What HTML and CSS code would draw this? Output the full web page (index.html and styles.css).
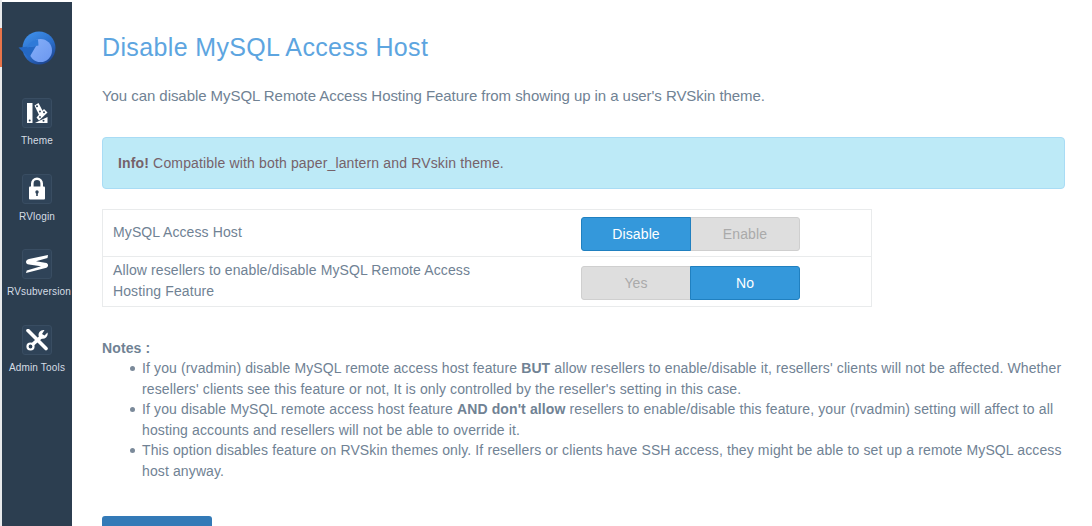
FILE: index.html
```html
<!DOCTYPE html>
<html lang="en">
<head>
<meta charset="utf-8">
<title>Disable MySQL Access Host</title>
<link rel="stylesheet" href="styles.css">
</head>
<body>
<div class="shell">
  <div class="edge"><span class="edge-mark"></span></div>
  <nav class="sidebar">
    <div class="logo">
      <svg width="40" height="35" viewBox="16 30 40 35">
        <defs>
          <linearGradient id="lg" x1="0.2" y1="0" x2="0.8" y2="1"><stop offset="0" stop-color="#3f90ea"/><stop offset="0.55" stop-color="#2a6cc8"/><stop offset="1" stop-color="#1b3f88"/></linearGradient>
          <linearGradient id="lg2" x1="0" y1="0" x2="1" y2="1"><stop offset="0" stop-color="#86aff8"/><stop offset="1" stop-color="#6b97f0"/></linearGradient>
        </defs>
        <circle cx="37" cy="48" r="16.500" fill="url(#lg)"/>
        <circle cx="38.500" cy="50.500" r="11.500" fill="url(#lg2)"/>
        <path d="M16.500 47.500 L34 46 L27 58 Z" fill="#2468c4"/>
        <path d="M25 47.500 C27 43 31 40 36 39.300 L36.500 45.500 Z" fill="#2f7ad8"/>
      </svg>
    </div>
    <a class="nav-item">
      <span class="nav-icon">
        <svg width="22" height="22" viewBox="0 0 22 22" fill="#fff">
          <path d="M1 1h5.500v20H1z"/><circle cx="3.700" cy="18.500" r="1" fill="#2f4358"/>
          <path d="M8.500 3.500L12.500 1L18 11.500L13.500 14Z"/><circle cx="11" cy="4.200" r="1" fill="#2f4358"/><circle cx="14" cy="9.500" r=".9" fill="#2f4358"/>
          <path d="M18 7L21.500 10.500L13 18.500L10.500 15.500Z"/><circle cx="18" cy="10.300" r="1" fill="#2f4358"/><circle cx="14" cy="15" r=".9" fill="#2f4358"/>
          <path d="M9 21L14 18.500L21.500 15V21Z"/><circle cx="17.500" cy="18.700" r="1" fill="#2f4358"/>
        </svg>
      </span>
      <span class="nav-label">Theme</span>
    </a>
    <a class="nav-item">
      <span class="nav-icon">
        <svg width="16" height="23" viewBox="0 0 16 23">
          <path d="M3.300 11V6.500a4.700 4.700 0 0 1 9.400 0V11" fill="none" stroke="#fff" stroke-width="2.600"/>
          <rect x="0" y="9.500" width="16" height="13" rx="1" fill="#fff"/>
          <circle cx="8" cy="15" r="1.700" fill="#2f4358"/><rect x="7.200" y="15.500" width="1.600" height="3.500" fill="#2f4358"/>
        </svg>
      </span>
      <span class="nav-label">RVlogin</span>
    </a>
    <a class="nav-item">
      <span class="nav-icon">
        <svg width="22" height="18" viewBox="0 0 22 18" fill="#fff">
          <path d="M22 0L21.500 3L10 6.300L20.500 8C23 9.500 22.500 12 19.500 13L0 18L.7 15.500L15 11.300L3 9.500C-1 9 -1 5 3 4Z"/>
        </svg>
      </span>
      <span class="nav-label nav-label-wide">RVsubversion</span>
    </a>
    <a class="nav-item">
      <span class="nav-icon">
        <svg width="22" height="22" viewBox="0 0 22 22">
          <path d="M2 1.500 L20 19.500" stroke="#fff" stroke-width="3.600" stroke-linecap="round"/>
          <path d="M15 8 L6 16" stroke="#fff" stroke-width="3.600"/>
          <circle cx="4.500" cy="17.500" r="3" fill="none" stroke="#fff" stroke-width="2.200"/>
          <path d="M21.500 3.500 L18.500 6.500 L16 5 L18.500 1 A5 5 0 0 0 13 8 L15 9.500 A5 5 0 0 0 21.500 3.500Z" fill="#fff"/>
        </svg>
      </span>
      <span class="nav-label">Admin Tools</span>
    </a>
  </nav>
  <main class="content">
    <h1 class="title">Disable MySQL Access Host</h1>
    <p class="lead">You can disable MySQL Remote Access Hosting Feature from showing up in a user's RVSkin theme.</p>
    <div class="alert"><strong>Info!</strong> Compatible with both paper_lantern and RVskin theme.</div>
    <div class="options">
      <div class="row row-one">
        <div class="row-label">MySQL Access Host</div>
        <div class="toggle">
          <span class="tg on tg-a">Disable</span>
          <span class="tg off tg-b">Enable</span>
        </div>
      </div>
      <div class="row row-two">
        <div class="row-label">Allow resellers to enable/disable MySQL Remote Access Hosting Feature</div>
        <div class="toggle">
          <span class="tg off tg-a">Yes</span>
          <span class="tg on tg-b">No</span>
        </div>
      </div>
    </div>
    <div class="notes">
      <div class="notes-title">Notes :</div>
      <ul class="notes-list">
        <li>If you (rvadmin) disable MySQL remote access host feature <b>BUT</b> allow resellers to enable/disable it, resellers' clients will not be affected. Whether resellers' clients see this feature or not, It is only controlled by the reseller's setting in this case.</li>
        <li>If you disable MySQL remote access host feature <b>AND don't allow</b> resellers to enable/disable this feature, your (rvadmin) setting will affect to all hosting accounts and resellers will not be able to override it.</li>
        <li>This option disables feature on RVSkin themes only. If resellers or clients have SSH access, they might be able to set up a remote MySQL access host anyway.</li>
      </ul>
    </div>
    <div class="save"></div>
  </main>
</div>
</body>
</html>
```
FILE: styles.css
```css
html, body {
  margin: 0;
  height: 526px;
  overflow: hidden;
  background: #fff;
}
body {
  font-family: "Liberation Sans", Arial, sans-serif;
  font-size: 14px;
  letter-spacing: 0.12px;
  color: #708294;
}
.shell {
  display: flex;
  height: 526px;
  overflow: hidden;
}
.edge {
  width: 2px;
  background: #e8eaec;
  flex: none;
  padding-top: 28px;
}
.edge-mark {
  display: block;
  width: 2px;
  height: 39px;
  background: #e8744a;
}
.sidebar {
  width: 70px;
  flex: none;
  margin-top: 2px;
  background: #2c3e50;
  display: flex;
  flex-direction: column;
  align-items: center;
}
.logo {
  margin-top: 28px;
  height: 35px;
  margin-bottom: 33px;
  margin-left: 2px;
}
.nav-item {
  display: flex;
  flex-direction: column;
  align-items: center;
  height: 75.670px;
}
.nav-icon {
  width: 30px;
  height: 30px;
  flex: none;
  box-sizing: border-box;
  border: 1px solid #394d62;
  border-radius: 3px;
  background: #2f4358;
  display: flex;
  align-items: center;
  justify-content: center;
}
.nav-label {
  margin-top: 6px;
  font-size: 10px;
  letter-spacing: 0.17px;
  line-height: 14px;
  color: #d5dde5;
  white-space: nowrap;
}
.nav-label-wide {
  margin-left: 4px;
}
.content {
  flex: 1;
  min-width: 0;
  padding: 0 27px 0 30px;
}
.title {
  margin: 32px 0 0;
  font-size: 25px;
  line-height: 30px;
  font-weight: 400;
  letter-spacing: 0.36px;
  color: #5da5e0;
}
.lead {
  margin: 24px 0 0;
  font-size: 15px;
  line-height: 20px;
  letter-spacing: -0.06px;
}
.alert {
  margin-top: 31px;
  box-sizing: border-box;
  height: 52px;
  padding: 15px;
  line-height: 20px;
  letter-spacing: 0.15px;
  background: #bdeaf7;
  border: 1px solid #a9dcf5;
  border-radius: 4px;
  color: #76626a;
}
.options {
  margin-top: 20px;
  box-sizing: border-box;
  width: 770px;
  border: 1px solid #e9ebec;
}
.row {
  display: flex;
  align-items: center;
  padding: 0 10px;
  box-sizing: border-box;
}
.row-one {
  height: 46px;
}
.row-two {
  height: 50px;
  border-top: 1px solid #e9ebec;
}
.row-label {
  width: 468px;
  flex: none;
  margin-bottom: 2px;
  line-height: 21px;
  letter-spacing: 0.11px;
  padding-right: 90px;
  box-sizing: border-box;
}
.toggle {
  display: flex;
  margin-top: 2px;
}
.row-two .toggle {
  margin-top: 3px;
}
.tg {
  box-sizing: border-box;
  width: 110px;
  height: 34px;
  display: flex;
  align-items: center;
  justify-content: center;
  border: 1px solid;
}
.tg-a { border-radius: 3px 0 0 3px; }
.tg-b { border-radius: 0 3px 3px 0; margin-left: -1px; }
.on {
  background: #3498db;
  border-color: #2080c0;
  color: #fff;
  z-index: 1;
}
.off {
  background: #dedede;
  border-color: #cfcfcf;
  color: #aaa;
}
.notes {
  margin-top: 30.500px;
  line-height: 20.500px;
}
.notes-title {
  font-weight: 700;
}
.notes-list {
  margin: 0;
  padding-left: 40px;
  list-style: none;
}
.notes-list li {
  position: relative;
}
.notes-list li::before {
  content: "";
  position: absolute;
  left: -12px;
  top: 8px;
  width: 5px;
  height: 5px;
  border-radius: 50%;
  background: #7b8a9a;
}
.save {
  margin-top: 34.500px;
  width: 110px;
  height: 34px;
  background: #337ab7;
  border-radius: 3px;
}
```
